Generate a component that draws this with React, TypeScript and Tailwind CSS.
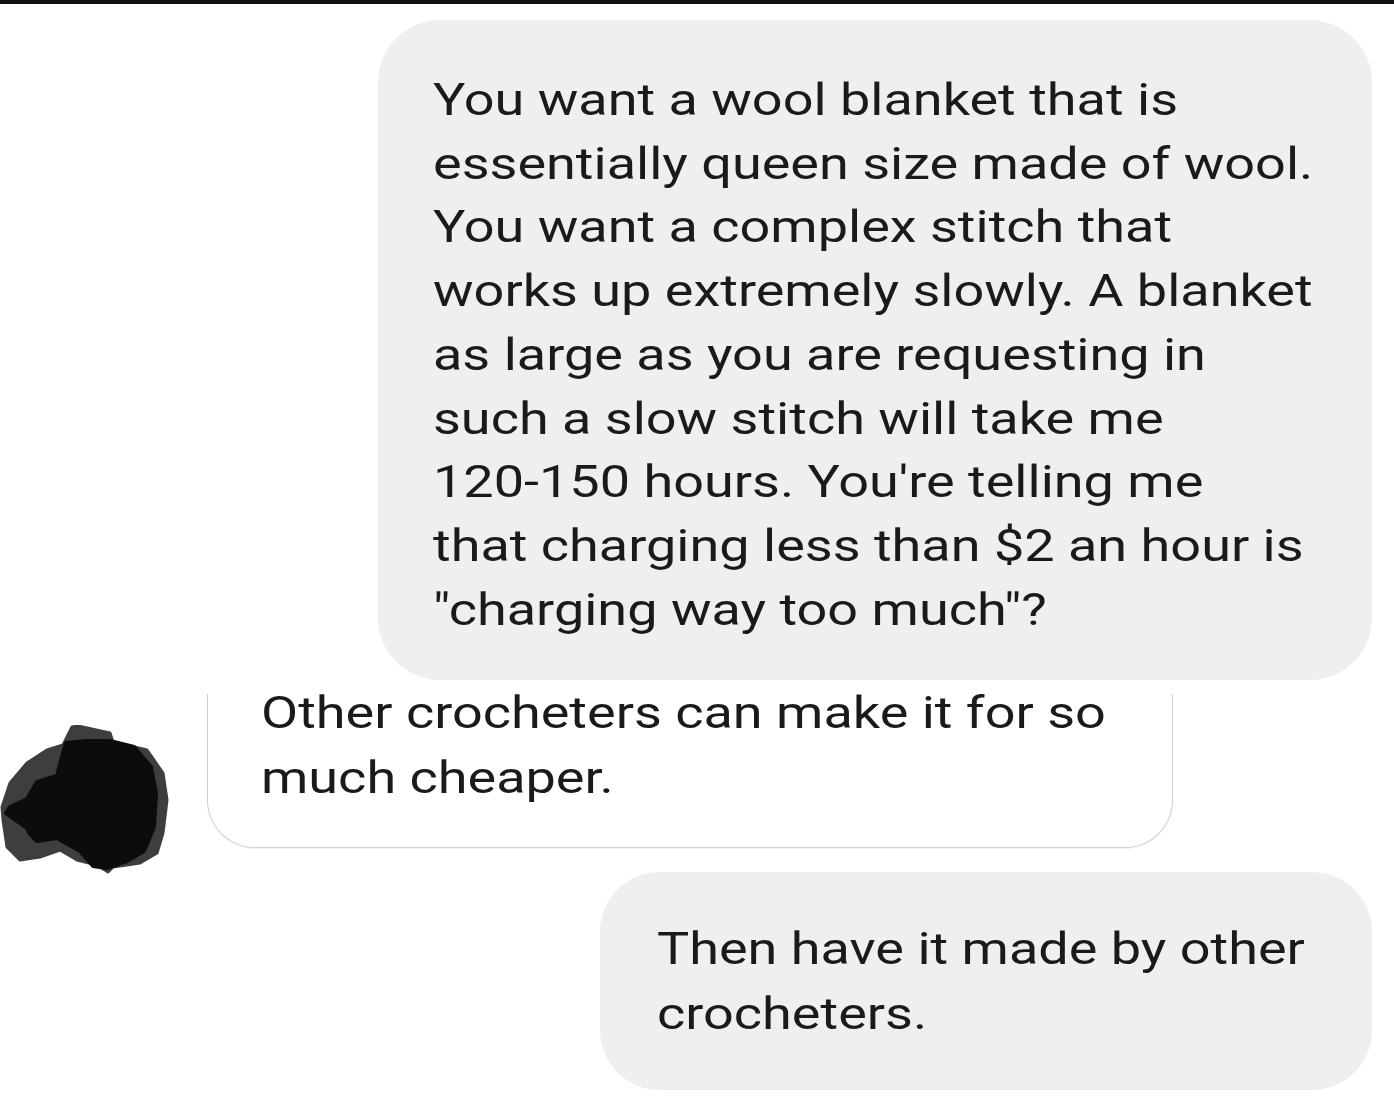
const firstMessage = [
  "You want a wool blanket that is",
  "essentially queen size made of wool.",
  "You want a complex stitch that",
  "works up extremely slowly. A blanket",
  "as large as you are requesting in",
  "such a slow stitch will take me",
  "120-150 hours. You're telling me",
  "that charging less than $2 an hour is",
  "\"charging way too much\"?",
];

const theirMessage = ["Other crocheters can make it for so", "much cheaper."];

const lastMessage = ["Then have it made by other", "crocheters."];

// the screenshot is stretched sideways, so glyphs are scaled on x only
function Lines({ lines }: { lines: string[] }) {
  return (
    <div className="origin-left scale-x-[1.2]">
      {lines.map((line) => (
        <div key={line} className="whitespace-nowrap">
          {line}
        </div>
      ))}
    </div>
  );
}

function Avatar() {
  return (
    <svg width="170" height="150" viewBox="0 0 170 150" className="block">
      <path
        d="M72 2 L78 1 L110 8 L113 17 L147 25 L163 48 L167 75 L163 108 L157 128 L140 138 L113 142 L108 147 L97 140 L77 135 L60 125 L40 132 L20 135 L7 122 L3 95 L2 82 L10 58 L27 38 L47 25 L63 20 L67 12 Z"
        fill="#3e3e3e"
        stroke="#3e3e3e"
        strokeWidth="3"
        strokeLinejoin="round"
      />
      <path
        d="M66 18 L87 16 L110 16 L134 22 L151 42 L156 68 L154 102 L144 126 L127 136 L107 143 L93 141 L80 126 L57 113 L37 116 L30 109 L27 103 L6 88 L10 82 L27 74 L37 57 L57 51 L62 32 Z"
        fill="#0c0c0c"
        stroke="#0c0c0c"
        strokeWidth="4"
        strokeLinejoin="round"
      />
    </svg>
  );
}

export default function App() {
  return (
    <div
      className="flex h-[1106px] w-[1394px] flex-col overflow-hidden border-t-4 border-[#111111] bg-white text-[45px] leading-[63.7px] text-[#1a1a1a]"
      style={{ fontFamily: "Roboto, 'Noto Sans', sans-serif" }}
    >
      <div className="mt-4 flex justify-end pr-[22px]">
        <div className="w-[994px] rounded-[62px] bg-[#efefef] pb-[39px] pl-[55px] pt-[48px]">
          <Lines lines={firstMessage} />
        </div>
      </div>

      <div className="mt-[14px] flex items-start">
        <div className="w-[207px] pt-[31px]">
          <Avatar />
        </div>
        <div className="h-[154px] w-[966px] overflow-hidden rounded-b-[48px] border-x border-b border-[#cfcfcf] pl-[53px] leading-[65px] shadow-[0_1px_1px_rgba(0,0,0,0.06)]">
          <div className="-mt-[14px]">
            <Lines lines={theirMessage} />
          </div>
        </div>
      </div>

      <div className="-mt-[3px] flex justify-end pr-[22px]">
        <div className="h-[218px] w-[772px] rounded-[60px] bg-[#efefef] pl-[57px] pt-[44px] leading-[65px]">
          <Lines lines={lastMessage} />
        </div>
      </div>
    </div>
  );
}
